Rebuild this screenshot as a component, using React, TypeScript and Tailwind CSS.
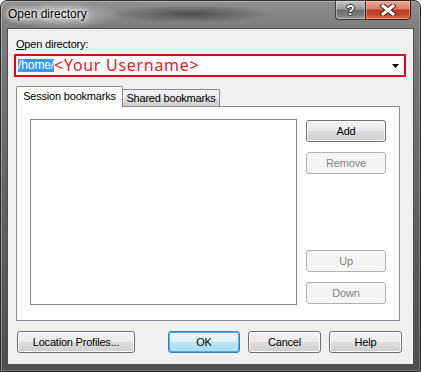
import React from "react";

const font = '"Liberation Sans", Arial, sans-serif';

const btnBase =
  "h-[22px] flex items-center justify-center rounded-[3px] border text-[11px] tracking-[-0.2px] leading-none";
const btnNormal =
  "border-[#707070] text-black bg-[linear-gradient(to_bottom,#f2f2f2_0%,#ebebeb_50%,#dddddd_50%,#cfcfcf_100%)] shadow-[inset_0_0_0_1px_#fbfbfb]";
const btnDisabled = "border-[#adb2b5] text-[#838383] bg-[#f4f4f4]";
const btnDefault =
  "border-[#3c7fb1] text-black bg-[linear-gradient(to_bottom,#eaf6fd_0%,#d9f0fc_50%,#bee6fd_50%,#a7d9f5_100%)] shadow-[inset_0_0_0_1px_#48b0f0]";

export default function App() {
  return (
    <div
      className="w-[421px] h-[372px] flex flex-col rounded-t-[7px] border border-[#2c2c2c] shadow-[inset_1px_1px_0_rgba(255,255,255,0.35),inset_-1px_-1px_0_rgba(255,255,255,0.2)] bg-[radial-gradient(ellipse_60px_14px_at_60px_14px,rgba(255,255,255,0.5),transparent),radial-gradient(ellipse_80px_9px_at_190px_13px,rgba(30,30,30,0.55),transparent),linear-gradient(to_bottom,#8f8f8f_0px,#7c7c7c_28px,#626262_200px,#4e4e4e_372px)]"
      style={{ fontFamily: font }}
    >
      {/* Title bar */}
      <div className="h-[27px] flex items-start justify-between">
        <div className="pl-[7px] pt-[6px] text-[12px] leading-[15px] text-black [text-shadow:0_0_6px_#fff,0_0_10px_#fff,0_0_3px_#fff]">
          Open directory
        </div>
        <div className="flex -mt-px mr-[9px]">
          <div className="w-[30px] h-[20px] border border-[#3a3a3a] border-r-0 rounded-bl-[4px] flex items-center justify-center bg-[linear-gradient(to_bottom,#c4c4c4_0%,#9a9a9a_45%,#6c6c6c_50%,#7c7c7c_80%,#9c9c9c_100%)] shadow-[inset_0_0_0_1px_rgba(255,255,255,0.35)]">
            <span className="text-white font-bold text-[14px] leading-none [text-shadow:0_0_1px_#222,1px_0_0_#333,-1px_0_0_#333,0_1px_0_#333,0_-1px_0_#333]">
              ?
            </span>
          </div>
          <div className="w-[46px] h-[20px] border border-[#3a1a14] rounded-br-[4px] flex items-center justify-center bg-[linear-gradient(to_bottom,#e7aa9a_0%,#d57c66_45%,#bd3c22_50%,#c3442a_75%,#e0744f_100%)] shadow-[inset_0_0_0_1px_rgba(255,220,210,0.4)]">
            <svg width="16" height="12" viewBox="0 0 16 12">
              <path d="M3 2 L13 10 M13 2 L3 10" stroke="#3b2420" strokeWidth="5" strokeLinecap="square" fill="none" />
              <path d="M3 2 L13 10 M13 2 L3 10" stroke="#ffffff" strokeWidth="3" strokeLinecap="square" fill="none" />
            </svg>
          </div>
        </div>
      </div>

      {/* Client area */}
      <div className="mx-[6px] mb-[6px] flex-1 border border-[#4f4f4f] bg-[#f0f0f0] flex flex-col">
        <div className="ml-[8px] mt-[9px] h-[13px] leading-[13px] text-[11px] tracking-[-0.2px] text-black">
          <span className="underline underline-offset-[1px]">O</span>pen directory:
        </div>

        {/* Combo */}
        <div className="ml-[6px] mt-[3px] w-[392px] h-[23px] border-2 border-[#e3001b] bg-white flex items-center justify-between">
          <div className="flex items-center pl-[2px]">
            <span className="bg-[#3399ff] text-white text-[12px] leading-[13px] h-[13px] tracking-[-0.1px]">
              /home/
            </span>
            <span className="text-[#e8202a] text-[16px] leading-[19px] tracking-[0.7px] font-['Noto_Sans',sans-serif]">
              &lt;Your Username&gt;
            </span>
          </div>
          <svg width="7" height="4" viewBox="0 0 7 4" className="mr-[5px]">
            <path d="M0 0 H7 L3.5 4 Z" fill="#000" />
          </svg>
        </div>

        {/* Tabs */}
        <div className="ml-[8px] mt-[9px] flex items-end h-[20px]">
          <div className="relative z-10 -mb-px h-[21px] w-[107px] border border-b-0 border-[#898c95] bg-white rounded-t-[2px] flex items-start justify-center pt-[3px] text-[11px] tracking-[-0.2px] text-black leading-[13px]">
            Session bookmarks
          </div>
          <div className="-ml-px h-[17px] w-[98px] border border-b-0 border-[#898c95] rounded-t-[2px] bg-[linear-gradient(to_bottom,#f3f3f3_0%,#ebebeb_50%,#dddddd_50%,#cfcfcf_100%)] flex items-start justify-center pt-[2px] text-[11px] tracking-[-0.2px] text-black leading-[13px]">
            Shared bookmarks
          </div>
        </div>
        <div className="ml-[8px] w-[384px] h-[215px] border border-[#898c95] bg-white flex pl-[13px] pt-[12px]">
          <div className="w-[267px] h-[186px] border border-[#828790] bg-white" />
          <div className="ml-[9px] w-[80px] flex flex-col pt-[1px]">
            <div className={`${btnBase} ${btnNormal}`}>Add</div>
            <div className={`${btnBase} ${btnDisabled} mt-[10px]`}>Remove</div>
            <div className={`${btnBase} ${btnDisabled} mt-[76px]`}>Up</div>
            <div className={`${btnBase} ${btnDisabled} mt-[10px]`}>Down</div>
          </div>
        </div>

        {/* Bottom buttons */}
        <div className="mt-[10px] ml-[9px] flex">
          <div className={`${btnBase} ${btnNormal} w-[118px]`}>Location Profiles...</div>
          <div className={`${btnBase} ${btnDefault} w-[72px] ml-[33px]`}>OK</div>
          <div className={`${btnBase} ${btnNormal} w-[73px] ml-[8px]`}>Cancel</div>
          <div className={`${btnBase} ${btnNormal} w-[73px] ml-[8px]`}>Help</div>
        </div>
      </div>
    </div>
  );
}
